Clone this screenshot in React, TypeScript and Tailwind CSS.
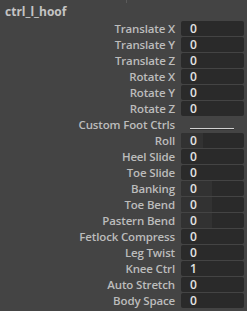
import React from 'react';

type Row = { label: string; value?: string; slider?: number; separator?: boolean };

const rows: Row[] = [
  { label: 'Translate X', value: '0' },
  { label: 'Translate Y', value: '0' },
  { label: 'Translate Z', value: '0' },
  { label: 'Rotate X', value: '0' },
  { label: 'Rotate Y', value: '0' },
  { label: 'Rotate Z', value: '0' },
  { label: 'Custom Foot Ctrls', separator: true },
  { label: 'Roll', value: '0', slider: 22 },
  { label: 'Heel Slide', value: '0' },
  { label: 'Toe Slide', value: '0' },
  { label: 'Banking', value: '0', slider: 31 },
  { label: 'Toe Bend', value: '0', slider: 31 },
  { label: 'Pastern Bend', value: '0', slider: 31 },
  { label: 'Fetlock Compress', value: '0' },
  { label: 'Leg Twist', value: '0' },
  { label: 'Knee Ctrl', value: '1' },
  { label: 'Auto Stretch', value: '0' },
  { label: 'Body Space', value: '0' },
];

export default function App() {
  return (
    <div
      className="relative w-[247px] h-[311px] overflow-hidden bg-[#444444] text-[#bcbcbc]"
      style={{ fontFamily: '"Open Sans", "DejaVu Sans", sans-serif' }}
    >
      {/* little tick at the top edge */}
      <div className="absolute left-[126px] top-0 w-px h-[3px] bg-[#5a5a5a]" />

      <div className="h-[21px] pl-[5px] pt-[5px] text-[12px] font-bold leading-[14px] text-[#c4c4c4]">
        ctrl_l_hoof
      </div>

      <div className="flex flex-col gap-px">
        {rows.map(r => (
          <div key={r.label} className="flex h-[15px] items-center">
            <div className="w-[175px] shrink-0 text-right text-[11.5px] font-semibold leading-[15px] tracking-[-0.15px]">
              {r.label}
            </div>
            <div className="w-[6px] shrink-0" />
            {r.separator ? (
              <div className="flex h-[15px] w-[63px] items-center pl-[9px]">
                <div className="mt-[8px] h-px w-[44px] bg-[#d0d0d0] shadow-[0_1px_0_#333333]" />
              </div>
            ) : (
              <div className="relative flex h-[15px] w-[63px] items-center overflow-hidden rounded-[2px] bg-[#2a2a2a]">
                {r.slider ? (
                  <div
                    className="absolute left-0 top-0 h-full bg-[#323232]"
                    style={{ width: r.slider }}
                  />
                ) : null}
                <span className="relative pl-[9px] text-[12px] font-semibold leading-[15px] text-[#e4e4e4]">
                  {r.value}
                </span>
              </div>
            )}
          </div>
        ))}
      </div>
    </div>
  );
}
